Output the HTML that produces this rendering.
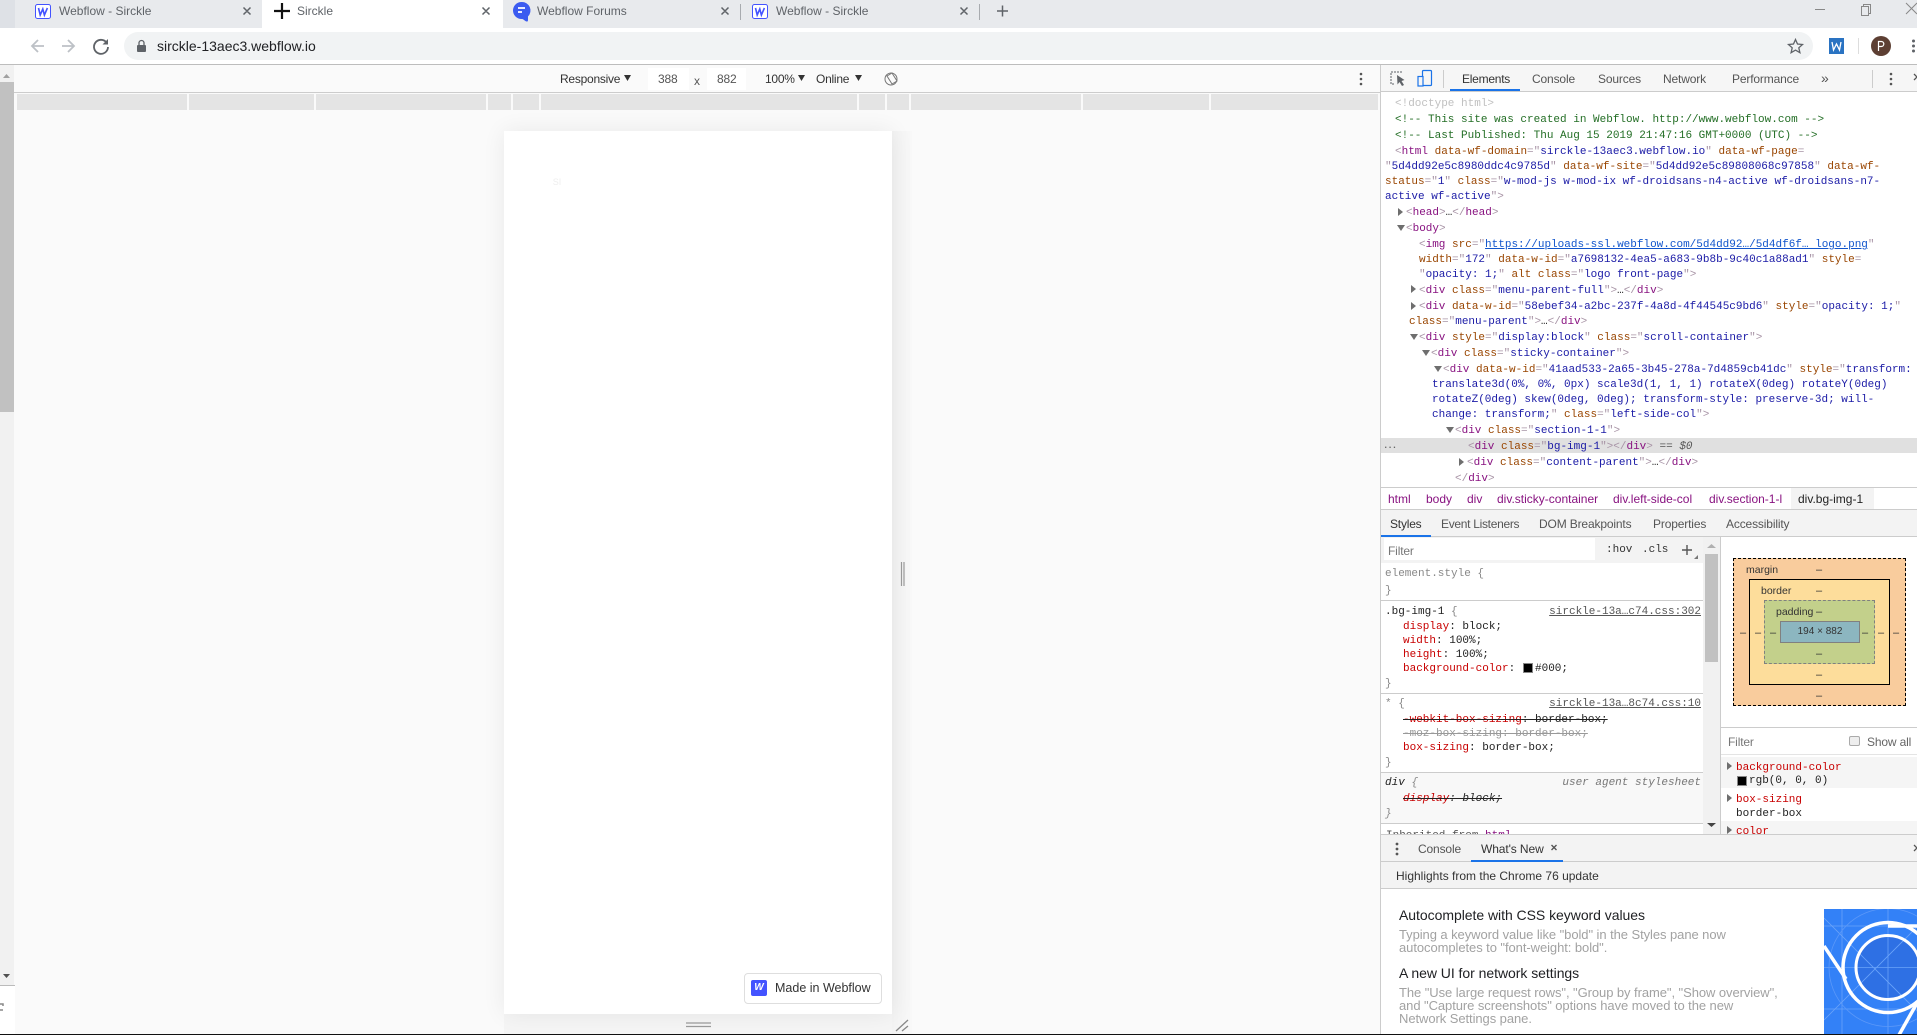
<!DOCTYPE html>
<html><head><meta charset="utf-8"><title>Sirckle</title>
<style>
html,body{margin:0;padding:0;background:#fff;width:1917px;height:1035px;overflow:hidden}
#r{position:relative;width:1917px;height:1035px;overflow:hidden;font-family:"Liberation Sans",sans-serif;font-size:12px;color:#333}
.b{position:absolute}
.t,.m{position:absolute;white-space:pre;line-height:16px;height:16px}
.m{font-family:"Liberation Mono",monospace;font-size:11px;color:#222;margin-top:1px}
.g{color:#5f6368}.dt{color:#555;letter-spacing:-.15px}
.tg{color:#881280}.br{color:#a894a6}.an{color:#994500}.av{color:#1a1aa6}.c{color:#236e25}.lk{color:#1155cc;text-decoration:underline}
.p{color:#c80000}.s{text-decoration:line-through}
.cr{color:#888}.u{color:#555;text-decoration:underline}
.h{color:#202124;font-size:14px;letter-spacing:-.04px}.d{color:#a2a2a2;font-size:13px;letter-spacing:-.07px}
.bm{font-size:10.5px;color:#333}
svg{position:absolute;left:0;top:0}
</style></head><body><div id="r">
<!-- chrome -->
<div class="b" style="left:0;top:0;width:1917px;height:28px;background:#e8eaed"></div>
<div class="b" style="left:0;top:0;width:15px;height:28px;background:#dee1e6"></div>
<div class="b" style="left:15px;top:0;width:247px;height:28px;background:#e8eaed;border-bottom-right-radius:8px"></div>
<div class="b" style="left:262px;top:0;width:241px;height:28px;background:#fff"></div>
<div class="b" style="left:0;top:28px;width:1917px;height:36px;background:#fff"></div>
<div class="b" style="left:124px;top:32px;width:1689px;height:28px;background:#f1f3f4;border-radius:14px"></div>
<div class="b" style="left:0;top:64px;width:1917px;height:1px;background:#bdbdbd"></div>
<div class="t g" style="left:59px;top:3px">Webflow - Sirckle</div>
<div class="t g" style="left:297px;top:3px">Sirckle</div>
<div class="t g" style="left:537px;top:3px">Webflow Forums</div>
<div class="t g" style="left:776px;top:3px">Webflow - Sirckle</div>
<div class="t" style="left:157px;top:38px;font-size:14px;color:#202124">sirckle-13aec3.webflow.io</div>
<!-- main -->
<div class="b" style="left:0;top:65px;width:1380px;height:970px;background:#fafafa"></div>
<div class="b" style="left:14px;top:92px;width:1366px;height:1px;background:#ccc"></div>
<div class="b" style="left:17px;top:94px;width:1361px;height:16px;background:#e4e4e4"></div>
<div class="b" style="left:187px;top:94px;width:2px;height:16px;background:#fafafa"></div>
<div class="b" style="left:314px;top:94px;width:2px;height:16px;background:#fafafa"></div>
<div class="b" style="left:486px;top:94px;width:2px;height:16px;background:#fafafa"></div>
<div class="b" style="left:511px;top:94px;width:2px;height:16px;background:#fafafa"></div>
<div class="b" style="left:539px;top:94px;width:2px;height:16px;background:#fafafa"></div>
<div class="b" style="left:857px;top:94px;width:2px;height:16px;background:#fafafa"></div>
<div class="b" style="left:885px;top:94px;width:2px;height:16px;background:#fafafa"></div>
<div class="b" style="left:909px;top:94px;width:2px;height:16px;background:#fafafa"></div>
<div class="b" style="left:1081px;top:94px;width:2px;height:16px;background:#fafafa"></div>
<div class="b" style="left:1209px;top:94px;width:2px;height:16px;background:#fafafa"></div>
<div class="b" style="left:0;top:65px;width:14px;height:920px;background:#f1f1f1"></div>
<div class="b" style="left:0;top:82px;width:14px;height:330px;background:#c1c1c1"></div>
<div class="b" style="left:0;top:985px;width:15px;height:1px;background:#bbb"></div>
<div class="b" style="left:0;top:986px;width:15px;height:48px;background:#fff"></div>
<div class="b" style="left:892px;top:131px;width:20px;height:903px;background:linear-gradient(90deg,#f3f3f3,#f8f8f8)"></div>
<div class="b" style="left:504px;top:1014px;width:388px;height:20px;background:#f5f5f5"></div>
<div class="b" style="left:504px;top:131px;width:388px;height:883px;background:#fff;box-shadow:0 0 22px rgba(0,0,0,.07)"></div>
<div class="b" style="left:744px;top:973px;width:136px;height:29px;background:#fff;border:1px solid #dedede;border-radius:4px"></div>
<div class="b" style="left:751px;top:980px;width:16px;height:16px;background:#4353ff;border-radius:2px;color:#fff;font:bold italic 10px/16px 'Liberation Sans',sans-serif;text-align:center">W</div>
<div class="t" style="left:775px;top:980px;font-size:12.5px;color:#333">Made in Webflow</div>
<div class="t" style="left:560px;top:71px;letter-spacing:-.25px">Responsive</div>
<div class="b" style="left:648px;top:68px;width:41px;height:22px;background:#fff"></div>
<div class="b" style="left:707px;top:68px;width:39px;height:22px;background:#fff"></div>
<div class="t dt" style="left:658px;top:71px">388</div>
<div class="t dt" style="left:694px;top:73px">x</div>
<div class="t dt" style="left:717px;top:71px">882</div>
<div class="t" style="left:765px;top:71px;letter-spacing:-.25px">100%</div>
<div class="t" style="left:816px;top:71px;letter-spacing:-.25px">Online</div>
<!-- devtools -->
<div class="b" style="left:1380px;top:65px;width:537px;height:970px;background:#fff;border-left:1px solid #ccc;box-sizing:border-box"></div>
<div class="b" style="left:1381px;top:65px;width:536px;height:26px;background:#f6f6f6"></div>
<div class="b" style="left:1381px;top:91px;width:536px;height:1px;background:#ccc"></div>
<div class="b" style="left:1450px;top:89px;width:70px;height:2px;background:#1a73e8"></div>
<div class="t" style="left:1462px;top:71px;letter-spacing:-.25px">Elements</div>
<div class="t dt" style="left:1532px;top:71px">Console</div>
<div class="t dt" style="left:1598px;top:71px">Sources</div>
<div class="t dt" style="left:1663px;top:71px">Network</div>
<div class="t dt" style="left:1732px;top:71px">Performance</div>
<div class="t dt" style="left:1821px;top:70px;font-size:14px">»</div>

<div class="b" style="left:1381px;top:438px;width:536px;height:15px;background:#e0e0e0"></div>
<div class="b" style="left:0;top:1px;width:1917px;height:490px">
<div class="m" style="left:1395px;top:94px;color:#c0c0c0">&lt;!doctype html&gt;</div>
<div class="m c" style="left:1395px;top:110px">&lt;!-- This site was created in Webflow. http://www.webflow.com --&gt;</div>
<div class="m c" style="left:1395px;top:126px">&lt;!-- Last Published: Thu Aug 15 2019 21:47:16 GMT+0000 (UTC) --&gt;</div>
<div class="m" style="left:1395px;top:142px"><span class="br">&lt;</span><span class="tg">html</span> <span class="an">data-wf-domain</span><span class="br">="</span><span class="av">sirckle-13aec3.webflow.io</span><span class="br">"</span> <span class="an">data-wf-page</span><span class="br">=</span></div>
<div class="m" style="left:1385px;top:157px"><span class="br">"</span><span class="av">5d4dd92e5c8980ddc4c9785d</span><span class="br">"</span> <span class="an">data-wf-site</span><span class="br">="</span><span class="av">5d4dd92e5c89808068c97858</span><span class="br">"</span> <span class="an">data-wf-</span></div>
<div class="m" style="left:1385px;top:172px"><span class="an">status</span><span class="br">="</span><span class="av">1</span><span class="br">"</span> <span class="an">class</span><span class="br">="</span><span class="av">w-mod-js w-mod-ix wf-droidsans-n4-active wf-droidsans-n7-</span></div>
<div class="m" style="left:1385px;top:187px"><span class="av">active wf-active</span><span class="br">"&gt;</span></div>
<div class="m" style="left:1406px;top:203px"><span class="br">&lt;</span><span class="tg">head</span><span class="br">&gt;</span>…<span class="br">&lt;/</span><span class="tg">head</span><span class="br">&gt;</span></div>
<div class="m" style="left:1406px;top:219px"><span class="br">&lt;</span><span class="tg">body</span><span class="br">&gt;</span></div>
<div class="m" style="left:1419px;top:235px"><span class="br">&lt;</span><span class="tg">img</span> <span class="an">src</span><span class="br">="</span><span class="lk">https://uploads-ssl.webflow.com/5d4dd92…/5d4df6f… logo.png</span><span class="br">"</span></div>
<div class="m" style="left:1419px;top:250px"><span class="an">width</span><span class="br">="</span><span class="av">172</span><span class="br">"</span> <span class="an">data-w-id</span><span class="br">="</span><span class="av">a7698132-4ea5-a683-9b8b-9c40c1a88ad1</span><span class="br">"</span> <span class="an">style</span><span class="br">=</span></div>
<div class="m" style="left:1419px;top:265px"><span class="br">"</span><span class="av">opacity: 1;</span><span class="br">"</span> <span class="an">alt class</span><span class="br">="</span><span class="av">logo front-page</span><span class="br">"&gt;</span></div>
<div class="m" style="left:1419px;top:281px"><span class="br">&lt;</span><span class="tg">div</span> <span class="an">class</span><span class="br">="</span><span class="av">menu-parent-full</span><span class="br">"&gt;</span>…<span class="br">&lt;/</span><span class="tg">div</span><span class="br">&gt;</span></div>
<div class="m" style="left:1419px;top:297px"><span class="br">&lt;</span><span class="tg">div</span> <span class="an">data-w-id</span><span class="br">="</span><span class="av">58ebef34-a2bc-237f-4a8d-4f44545c9bd6</span><span class="br">"</span> <span class="an">style</span><span class="br">="</span><span class="av">opacity: 1;</span><span class="br">"</span></div>
<div class="m" style="left:1409px;top:312px"><span class="an">class</span><span class="br">="</span><span class="av">menu-parent</span><span class="br">"&gt;</span>…<span class="br">&lt;/</span><span class="tg">div</span><span class="br">&gt;</span></div>
<div class="m" style="left:1419px;top:328px"><span class="br">&lt;</span><span class="tg">div</span> <span class="an">style</span><span class="br">="</span><span class="av">display:block</span><span class="br">"</span> <span class="an">class</span><span class="br">="</span><span class="av">scroll-container</span><span class="br">"&gt;</span></div>
<div class="m" style="left:1431px;top:344px"><span class="br">&lt;</span><span class="tg">div</span> <span class="an">class</span><span class="br">="</span><span class="av">sticky-container</span><span class="br">"&gt;</span></div>
<div class="m" style="left:1443px;top:360px"><span class="br">&lt;</span><span class="tg">div</span> <span class="an">data-w-id</span><span class="br">="</span><span class="av">41aad533-2a65-3b45-278a-7d4859cb41dc</span><span class="br">"</span> <span class="an">style</span><span class="br">="</span><span class="av">transform:</span></div>
<div class="m av" style="left:1432px;top:375px">translate3d(0%, 0%, 0px) scale3d(1, 1, 1) rotateX(0deg) rotateY(0deg)</div>
<div class="m av" style="left:1432px;top:390px">rotateZ(0deg) skew(0deg, 0deg); transform-style: preserve-3d; will-</div>
<div class="m" style="left:1432px;top:405px"><span class="av">change: transform;</span><span class="br">"</span> <span class="an">class</span><span class="br">="</span><span class="av">left-side-col</span><span class="br">"&gt;</span></div>
<div class="m" style="left:1455px;top:421px"><span class="br">&lt;</span><span class="tg">div</span> <span class="an">class</span><span class="br">="</span><span class="av">section-1-1</span><span class="br">"&gt;</span></div>
<div class="m" style="left:1383px;top:436px;color:#666;font-size:9px;font-weight:bold;letter-spacing:-1px">...</div>
<div class="m" style="left:1468px;top:437px"><span class="br">&lt;</span><span class="tg">div</span> <span class="an">class</span><span class="br">="</span><span class="av">bg-img-1</span><span class="br">"&gt;&lt;/</span><span class="tg">div</span><span class="br">&gt;</span> <span style="color:#555">== <i>$0</i></span></div>
<div class="m" style="left:1467px;top:453px"><span class="br">&lt;</span><span class="tg">div</span> <span class="an">class</span><span class="br">="</span><span class="av">content-parent</span><span class="br">"&gt;</span>…<span class="br">&lt;/</span><span class="tg">div</span><span class="br">&gt;</span></div>
<div class="m" style="left:1455px;top:469px"><span class="br">&lt;/</span><span class="tg">div</span><span class="br">&gt;</span></div>
</div>

<div class="b" style="left:1381px;top:487px;width:536px;height:1px;background:#ccc"></div>
<div class="b" style="left:1381px;top:488px;width:536px;height:21px;background:#fff"></div>
<div class="b" style="left:1791px;top:488px;width:83px;height:21px;background:#f3f3f3"></div>
<div class="t tg" style="left:1388px;top:491px">html</div>
<div class="t tg" style="left:1426px;top:491px">body</div>
<div class="t tg" style="left:1467px;top:491px">div</div>
<div class="t tg" style="left:1497px;top:491px">div.sticky-container</div>
<div class="t tg" style="left:1613px;top:491px">div.left-side-col</div>
<div class="t tg" style="left:1709px;top:491px">div.section-1-l</div>
<div class="t" style="left:1798px;top:491px;color:#222">div.bg-img-1</div>

<div class="b" style="left:1381px;top:509px;width:536px;height:28px;background:#f3f3f3;border-top:1px solid #ccc;border-bottom:1px solid #ccc;box-sizing:border-box"></div>
<div class="b" style="left:1381px;top:535px;width:50px;height:2px;background:#1a73e8"></div>
<div class="t" style="left:1390px;top:516px;letter-spacing:-.2px">Styles</div>
<div class="t dt" style="left:1441px;top:516px;letter-spacing:-.3px">Event Listeners</div>
<div class="t dt" style="left:1539px;top:516px">DOM Breakpoints</div>
<div class="t dt" style="left:1653px;top:516px">Properties</div>
<div class="t dt" style="left:1726px;top:516px">Accessibility</div>

<!-- styles -->
<div class="b" style="left:1381px;top:537px;width:322px;height:26px;background:#f3f3f3"></div>
<div class="b" style="left:1384px;top:538px;width:211px;height:22px;background:#fff"></div>
<div class="t dt" style="left:1388px;top:543px;color:#777">Filter</div>
<div class="m" style="left:1606px;top:541px;color:#333">:hov</div>
<div class="m" style="left:1642px;top:541px;color:#333">.cls</div>
<div class="b" style="left:1703px;top:537px;width:17px;height:297px;background:#f1f1f1"></div>
<div class="b" style="left:1705px;top:554px;width:13px;height:108px;background:#c1c1c1"></div>
<div class="b" style="left:1720px;top:537px;width:1px;height:297px;background:#ccc"></div>
<div class="m cr" style="left:1385px;top:565px">element.style {</div>
<div class="m cr" style="left:1385px;top:582px">}</div>
<div class="b" style="left:1381px;top:600px;width:322px;height:1px;background:#ccc"></div>
<div class="m" style="left:1385px;top:603px">.bg-img-1 <span class="cr">{</span></div>
<div class="m u" style="right:216px;top:603px">sirckle-13a…c74.css:302</div>
<div class="m" style="left:1403px;top:618px"><span class="p">display</span>: block;</div>
<div class="m" style="left:1403px;top:632px"><span class="p">width</span>: 100%;</div>
<div class="m" style="left:1403px;top:646px"><span class="p">height</span>: 100%;</div>
<div class="m" style="left:1403px;top:660px"><span class="p">background-color</span>: </div>
<div class="b" style="left:1523px;top:663px;width:10px;height:10px;box-sizing:border-box;background:#000;border:1px solid #888"></div>
<div class="m" style="left:1535px;top:660px">#000;</div>
<div class="m cr" style="left:1385px;top:675px">}</div>
<div class="b" style="left:1381px;top:693px;width:322px;height:1px;background:#ccc"></div>
<div class="m cr" style="left:1385px;top:695px">* {</div>
<div class="m u" style="right:216px;top:695px">sirckle-13a…8c74.css:10</div>
<div class="m s" style="left:1403px;top:711px"><span class="p">-webkit-box-sizing</span>: border-box;</div>
<div class="m s" style="left:1403px;top:725px;color:#999">-moz-box-sizing: border-box;</div>
<div class="m" style="left:1403px;top:739px"><span class="p">box-sizing</span>: border-box;</div>
<div class="m cr" style="left:1385px;top:754px">}</div>
<div class="b" style="left:1381px;top:772px;width:322px;height:51px;background:#f8f8f8;border-top:1px solid #ccc;box-sizing:border-box"></div>
<div class="m" style="left:1385px;top:774px"><i>div <span class="cr">{</span></i></div>
<div class="m" style="right:216px;top:774px;color:#777"><i>user agent stylesheet</i></div>
<div class="m s" style="left:1403px;top:790px"><i><span class="p">display</span>: block;</i></div>
<div class="m cr" style="left:1385px;top:805px"><i>}</i></div>
<div class="b" style="left:1381px;top:823px;width:322px;height:1px;background:#ccc"></div>
<div class="m" style="left:1386px;top:827px;color:#555">Inherited from <span class="tg">html</span></div>
<!-- box model -->
<div class="b" style="left:1733px;top:558px;width:173px;height:148px;box-sizing:border-box;background:#f9cc9d;border:1px dashed #000"></div>
<div class="b" style="left:1749px;top:579px;width:141px;height:106px;box-sizing:border-box;background:#fddd9b;border:1px solid #000"></div>
<div class="b" style="left:1764px;top:600px;width:111px;height:64px;box-sizing:border-box;background:#c3d08b;border:1px dashed #808080"></div>
<div class="b" style="left:1780px;top:621px;width:80px;height:22px;box-sizing:border-box;background:#8cb6c0;border:1px solid #808080"></div>
<div class="t bm" style="left:1746px;top:562px">margin</div>
<div class="t bm" style="left:1761px;top:583px">border</div>
<div class="t bm" style="left:1776px;top:604px">padding</div>
<div class="t" style="left:1780px;top:624px;width:80px;text-align:center;font-size:10px;color:#333">194 × 882</div>
<div class="t" style="left:1816px;top:562px;font-size:11px">–</div>
<div class="t" style="left:1816px;top:583px;font-size:11px">–</div>
<div class="t" style="left:1816px;top:604px;font-size:11px">–</div>
<div class="t" style="left:1816px;top:646px;font-size:11px">–</div>
<div class="t" style="left:1816px;top:667px;font-size:11px">–</div>
<div class="t" style="left:1816px;top:688px;font-size:11px">–</div>
<div class="t" style="left:1740px;top:625px;font-size:11px">–</div>
<div class="t" style="left:1755px;top:625px;font-size:11px">–</div>
<div class="t" style="left:1770px;top:625px;font-size:11px">–</div>
<div class="t" style="left:1862px;top:625px;font-size:11px">–</div>
<div class="t" style="left:1878px;top:625px;font-size:11px">–</div>
<div class="t" style="left:1893px;top:625px;font-size:11px">–</div>
<div class="b" style="left:1721px;top:727px;width:196px;height:1px;background:#ccc"></div>
<div class="t dt" style="left:1728px;top:734px;color:#777">Filter</div>
<div class="b" style="left:1849px;top:736px;width:11px;height:10px;box-sizing:border-box;background:#eee;border:1px solid #aaa;border-radius:2px"></div>
<div class="t dt" style="left:1867px;top:734px;color:#666">Show all</div>
<div class="b" style="left:1721px;top:754px;width:196px;height:1px;background:#e4e4e4"></div>
<div class="b" style="left:1721px;top:757px;width:196px;height:31px;background:#f5f5f5"></div>
<div class="b" style="left:1721px;top:821px;width:196px;height:13px;background:#f5f5f5"></div>
<div class="m p" style="left:1736px;top:759px">background-color</div>
<div class="b" style="left:1737px;top:776px;width:10px;height:10px;box-sizing:border-box;background:#000;border:1px solid #888"></div>
<div class="m" style="left:1749px;top:772px">rgb(0, 0, 0)</div>
<div class="m p" style="left:1736px;top:791px">box-sizing</div>
<div class="m" style="left:1736px;top:805px">border-box</div>
<div class="m p" style="left:1736px;top:823px">color</div>
<!-- drawer -->
<div class="b" style="left:1381px;top:834px;width:536px;height:28px;background:#f3f3f3;border-top:1px solid #ccc;border-bottom:1px solid #ccc;box-sizing:border-box"></div>
<div class="b" style="left:1471px;top:860px;width:92px;height:2px;background:#1a73e8"></div>
<div class="t dt" style="left:1418px;top:841px">Console</div>
<div class="t" style="left:1481px;top:841px;letter-spacing:-.1px">What's New</div>
<div class="b" style="left:1381px;top:862px;width:536px;height:27px;background:#f3f3f3;border-bottom:1px solid #ccc;box-sizing:border-box"></div>
<div class="t" style="left:1396px;top:868px;color:#333">Highlights from the Chrome 76 update</div>
<div class="t h" style="left:1399px;top:907px">Autocomplete with CSS keyword values</div>
<div class="t d" style="left:1399px;top:927px">Typing a keyword value like "bold" in the Styles pane now</div>
<div class="t d" style="left:1399px;top:940px">autocompletes to "font-weight: bold".</div>
<div class="t h" style="left:1399px;top:965px">A new UI for network settings</div>
<div class="t d" style="left:1399px;top:985px">The "Use large request rows", "Group by frame", "Show overview",</div>
<div class="t d" style="left:1399px;top:998px">and "Capture screenshots" options have moved to the new</div>
<div class="t d" style="left:1399px;top:1011px">Network Settings pane.</div>

<svg width="1917" height="1035" viewBox="0 0 1917 1035" fill="none">
<defs><clipPath id="ci"><rect x="1824" y="909" width="93" height="125"/></clipPath></defs>
<!-- tab icons -->
<rect x="35.5" y="4.5" width="15" height="14" rx="2" fill="#fff" stroke="#4353ff"/>
<path d="M38.5 8l1.7 7 2.6-6 1.6 6 3-7" stroke="#4353ff" stroke-width="1.6"/>
<rect x="752.5" y="4.5" width="15" height="14" rx="2" fill="#fff" stroke="#4353ff"/>
<path d="M755.5 8l1.7 7 2.6-6 1.6 6 3-7" stroke="#4353ff" stroke-width="1.6"/>
<path d="M274 11h16M282 3v16" stroke="#111" stroke-width="2.2"/>
<path d="M521.500 2a8.500 8.500 0 1 0 0 17c1 0 1.800.2 3.500 1.800 2 1.200 3 1 3-.800v-3.500a8.500 8.500 0 0 0-6.500-14.500z" fill="#3b5bf0"/>
<path d="M518 8h7M518 12h4" stroke="#fff" stroke-width="1.800"/>
<path d="M243.500 7.500l7 7M250.500 7.500l-7 7M482.500 7.500l7 7M489.500 7.500l-7 7M721.500 7.500l7 7M728.500 7.500l-7 7M960.500 7.500l7 7M967.500 7.500l-7 7" stroke="#5f6368" stroke-width="1.500"/>
<path d="M740.500 4v16M979.500 4v16" stroke="#a8abaf"/>
<path d="M997 11h11M1002.500 5.500v11" stroke="#5f6368" stroke-width="1.500"/>
<path d="M1815 9.500h10" stroke="#888"/>
<path d="M1861.500 6.500h7v9h-7zM1863.500 6.500v-2h7v9h-2" stroke="#888"/>
<path d="M1906 3l11 11M1917 3l-11 11" stroke="#888"/>
<!-- nav -->
<path d="M44 46H32M38 40l-6 6 6 6" stroke="#bdc1c6" stroke-width="1.800"/>
<path d="M62 46h12M68 40l6 6-6 6" stroke="#bdc1c6" stroke-width="1.800"/>
<path d="M106.500 42.500A7 7 0 1 0 108 47" stroke="#5f6368" stroke-width="1.800"/>
<path d="M108 39v5.500h-5.500z" fill="#5f6368"/>
<rect x="137" y="45" width="9" height="7" rx="1" fill="#5f6368"/>
<path d="M139 45v-2a2.500 2.500 0 0 1 5 0v2" stroke="#5f6368" stroke-width="1.300"/>
<path d="M1795.500 39.500l2 4.500 5 .5-3.700 3.300 1.100 4.900-4.400-2.600-4.400 2.600 1.100-4.900-3.700-3.300 5-.5z" stroke="#5f6368" stroke-width="1.300"/>
<rect x="1829" y="38" width="15" height="16" fill="#2a73c2"/>
<path d="M1832 42l1.500 8 3-6 3 6 1.500-8" stroke="#fff" stroke-width="1.300"/>
<path d="M1858.500 38v16" stroke="#ddd"/>
<circle cx="1881" cy="46" r="10" fill="#5d3f33"/>
<path d="M1878.500 51V41.500h2.800a2.500 2.500 0 0 1 0 5h-2.800" stroke="#fff" stroke-width="1.200"/>
<circle cx="1913.500" cy="41" r="1.500" fill="#5f6368"/><circle cx="1913.500" cy="46" r="1.500" fill="#5f6368"/><circle cx="1913.500" cy="51" r="1.500" fill="#5f6368"/>
<!-- scrollbar / device toolbar -->
<path d="M3 78l3.500-4 3.500 4z" fill="#a0a0a0"/>
<path d="M3 974h7l-3.500 4z" fill="#505050"/>
<path d="M0 1004l3 0 0 2M3 1010l-3 0" stroke="#888" stroke-width="1.500"/>
<path d="M624 75h7l-3.500 6zM798 75h7l-3.500 6zM855 75h7l-3.500 6z" fill="#333"/>
<circle cx="891" cy="79" r="6" stroke="#777"/>
<path d="M887 76l5-3 5 8-5 3z" stroke="#777" fill="#fafafa"/>
<circle cx="1361" cy="74" r="1.300" fill="#555"/><circle cx="1361" cy="79" r="1.300" fill="#555"/><circle cx="1361" cy="84" r="1.300" fill="#555"/>
<path d="M901.500 562v24M904 562v24" stroke="#999" stroke-width="1.200"/>
<path d="M686 1023h25M686 1026.500h25" stroke="#999" stroke-width="1.200"/>
<path d="M896 1031l12-11M902 1031l6-5" stroke="#888" stroke-width="1.300"/>
<text x="557" y="185" font-size="9" fill="#eee" text-anchor="middle" font-family="Liberation Sans">SI</text>
<!-- devtools toolbar -->
<path d="M1402 72h-11v12h4" stroke="#5f6368" stroke-dasharray="2 1"/>
<path d="M1397 75l7.500 5-3 1 2.500 4-2 1-2.500-4-2 2.500z" fill="#5f6368"/>
<rect x="1422.500" y="70.500" width="9" height="15" rx="1" stroke="#1a73e8" stroke-width="1.200"/>
<rect x="1418" y="76.500" width="5" height="9.500" stroke="#1a73e8" stroke-width="1.200" fill="#f6f6f6"/>
<path d="M1443.500 70v18M1872.500 70v18" stroke="#ccc"/>
<circle cx="1891" cy="74" r="1.300" fill="#555"/><circle cx="1891" cy="79" r="1.300" fill="#555"/><circle cx="1891" cy="84" r="1.300" fill="#555"/>
<path d="M1914 74l6 6M1920 74l-6 6" stroke="#555" stroke-width="1.300"/>
<!-- dom arrows -->
<path d="M1398 208l5 4-5 4zM1411 285l5 4-5 4zM1411 302l5 4-5 4zM1459 458l5 4-5 4z" fill="#6e6e6e"/>
<path d="M1397 225h8l-4 6zM1410 334h8l-4 6zM1422 350h8l-4 6zM1434 366h8l-4 6zM1446 427h8l-4 6z" fill="#6e6e6e"/>
<!-- styles toolbar -->
<path d="M1682 550h10M1687 545v10" stroke="#555" stroke-width="1.400"/>
<path d="M1698 555v4h-4z" fill="#777"/>
<path d="M1707 548l4.500-4 4.500 4z" fill="#b0b0b0"/>
<path d="M1707 823h9l-4.500 4z" fill="#444"/>
<path d="M1727 762l5 4-5 4zM1727 794l5 4-5 4zM1727 826l5 4-5 4z" fill="#6e6e6e"/>
<!-- drawer -->
<circle cx="1397" cy="844" r="1.400" fill="#555"/><circle cx="1397" cy="849" r="1.400" fill="#555"/><circle cx="1397" cy="854" r="1.400" fill="#555"/>
<path d="M1551.500 845l5 5M1556.500 845l-5 5" stroke="#555" stroke-width="1.400"/>
<path d="M1914 845l6 6M1920 845l-6 6" stroke="#555" stroke-width="1.300"/>
<!-- chrome 76 art -->
<g clip-path="url(#ci)">
<rect x="1824" y="909" width="93" height="125" fill="#3381f7"/>
<circle cx="1888" cy="967.500" r="33" fill="#2e70e4"/>
<path d="M1824 926h93M1824 967.500h93M1824 1009h93M1842 909v125M1888 909v125M1824 918l110 110M1824 1020l110-110" stroke="#6aa3f9" stroke-width=".8"/>
<circle cx="1888" cy="967.500" r="59" stroke="#5b98f8" stroke-width=".8"/>
<circle cx="1888" cy="967.500" r="32" stroke="#fff" stroke-width="3"/>
<circle cx="1888" cy="967.500" r="45" stroke="#fff" stroke-width="3.500"/>
<path d="M1824 946l22 33M1888 926h40M1917 1003l-18 32" stroke="#fff" stroke-width="3.500"/>
</g>
<path d="M0 1034.500h1917" stroke="#111"/>
</svg>
</div></body></html>
